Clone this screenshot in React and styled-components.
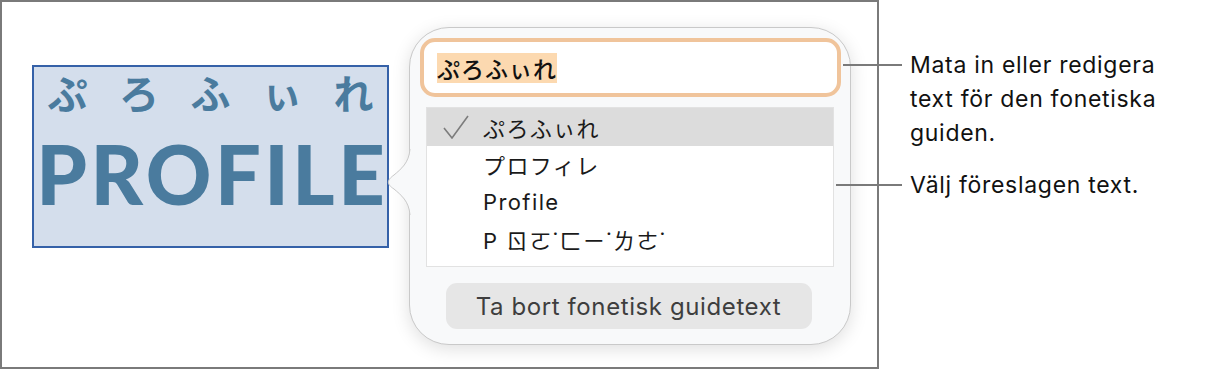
import styled, { createGlobalStyle } from "styled-components";

const GlobalStyle = createGlobalStyle`
  body {
    margin: 0;
    background: #ffffff;
    font-family: Inter, "Noto Sans CJK JP", sans-serif;
  }
`;

const ruby = ["ぷ", "ろ", "ふ", "ぃ", "れ"];

const options = [
  { text: "ぷろふぃれ", checked: true },
  { text: "プロフィレ" },
  { text: "Profile" },
  { text: "P ㄖㄛ˙ㄈㄧ˙ㄌㄜ˙" },
];

const callouts = [
  { lineStart: 7, lineWidth: 59, text: "Mata in eller redigera text för den fonetiska guiden." },
  { lineStart: 0, lineWidth: 66, text: "Välj föreslagen text." },
];

const Check = () => (
  <svg width="26" height="24" viewBox="0 0 26 24">
    <polyline points="1,13 9,23 25,1" fill="none" stroke="#7c7c7c" strokeWidth="1.6" />
  </svg>
);

const Arrow = () => (
  <ArrowSvg width="28" height="66" viewBox="0 0 28 66">
    <path d="M27,0 C26,14 18,20 11,26 C4,31 3,35 11,40 C18,46 26,52 27,66 L28,66 L28,0 Z" fill="#f8f9fa" />
    <path d="M27,0 C26,14 18,20 11,26 C4,31 3,35 11,40 C18,46 26,52 27,66" fill="none" stroke="#c9c9c9" strokeWidth="1" />
  </ArrowSvg>
);

export default function App() {
  return (
    <Stage>
      <GlobalStyle />
      <Frame>
        <SelectionBox>
          <Ruby>
            {ruby.map((c, i) => (
              <span key={i}>{c}</span>
            ))}
          </Ruby>
          <BigWord>PROFILE</BigWord>
        </SelectionBox>
        <Popover>
          <Arrow />
          <Field>
            <Selected>ぷろふぃれ</Selected>
          </Field>
          <List>
            {options.map((o, i) => (
              <Row key={i} active={o.checked}>
                <CheckSlot>{o.checked && <Check />}</CheckSlot>
                <RowText>{o.text}</RowText>
              </Row>
            ))}
          </List>
          <RemoveButton>Ta bort fonetisk guidetext</RemoveButton>
        </Popover>
      </Frame>
      <Callouts>
        {callouts.map((c, i) => (
          <Callout key={i}>
            <Line style={{ marginLeft: c.lineStart, width: c.lineWidth }} />
            <CalloutText>{c.text}</CalloutText>
          </Callout>
        ))}
      </Callouts>
    </Stage>
  );
}

const Stage = styled.div`
  position: relative;
  width: 1226px;
  height: 372px;
  display: flex;
`;

const Frame = styled.div`
  box-sizing: border-box;
  width: 879px;
  height: 369px;
  border: 2px solid #7a7a7a;
  display: flex;
  align-items: flex-start;
  padding-left: 30px;
`;

const SelectionBox = styled.div`
  box-sizing: border-box;
  margin-top: 63px;
  width: 357px;
  height: 183px;
  border: 2px solid #3561a8;
  background: #d4deec;
  display: flex;
  flex-direction: column;
  align-items: center;
`;

const Ruby = styled.div`
  width: 326px;
  display: flex;
  justify-content: space-between;
  font-family: "Noto Sans CJK JP", sans-serif;
  font-weight: 700;
  font-size: 40px;
  line-height: 50px;
  color: #4a7b9e;
`;

const BigWord = styled.div`
  margin-top: 25px;
  font-family: Lato, sans-serif;
  font-weight: 900;
  font-size: 81px;
  line-height: 64px;
  letter-spacing: 3.5px;
  margin-right: -3.5px;
  color: #4a7b9e;
`;

const Popover = styled.div`
  position: relative;
  box-sizing: border-box;
  margin-left: 20px;
  margin-top: 25px;
  width: 442px;
  height: 318px;
  border: 1px solid #c9c9c9;
  border-radius: 40px;
  background: #f8f9fa;
  box-shadow: 0 4px 18px rgba(0, 0, 0, 0.13);
  padding: 10px 9px 0 10px;
  display: flex;
  flex-direction: column;
`;

const ArrowSvg = styled.svg`
  position: absolute;
  left: -27px;
  top: 121px;
`;

const Field = styled.div`
  box-sizing: border-box;
  height: 59px;
  border: 4px solid #f0c49b;
  border-radius: 15px;
  background: #ffffff;
  padding-left: 13px;
  display: flex;
  align-items: center;
`;

const Selected = styled.span`
  background: #fcd9b0;
  font-family: "Noto Sans CJK JP", sans-serif;
  font-weight: 500;
  font-size: 23px;
  line-height: 30px;
  color: #111;
  letter-spacing: 1px;
`;

const List = styled.div`
  box-sizing: border-box;
  margin: 10px 7px 0 6px;
  height: 160px;
  border: 1px solid #e2e2e2;
  background: #ffffff;
`;

const Row = styled.div`
  height: 37.5px;
  display: flex;
  align-items: center;
  background: ${(p) => (p.active ? "#dcdcdc" : "transparent")};
`;

const CheckSlot = styled.div`
  width: 56px;
  padding-left: 16px;
  box-sizing: border-box;
  display: flex;
  align-items: center;
`;

const RowText = styled.span`
  font-size: 22px;
  color: #1a1a1a;
  letter-spacing: 1.4px;
`;

const RemoveButton = styled.button`
  align-self: center;
  margin-top: 16px;
  margin-left: -4px;
  width: 366px;
  height: 46px;
  border: none;
  border-radius: 11px;
  background: #e6e6e6;
  font-family: Inter, sans-serif;
  font-size: 24px;
  letter-spacing: 0.6px;
  color: #3e3e3e;
`;

const Callouts = styled.div`
  position: absolute;
  left: 836px;
  top: 48px;
  width: 390px;
  display: flex;
  flex-direction: column;
  gap: 18px;
`;

const Callout = styled.div`
  display: flex;
  align-items: flex-start;
`;

const Line = styled.div`
  height: 2px;
  margin-top: 16px;
  background: #7a7a7a;
`;

const CalloutText = styled.div`
  margin-left: 8px;
  width: 285px;
  font-size: 23px;
  line-height: 34px;
  letter-spacing: 0.7px;
  color: #111;
`;
